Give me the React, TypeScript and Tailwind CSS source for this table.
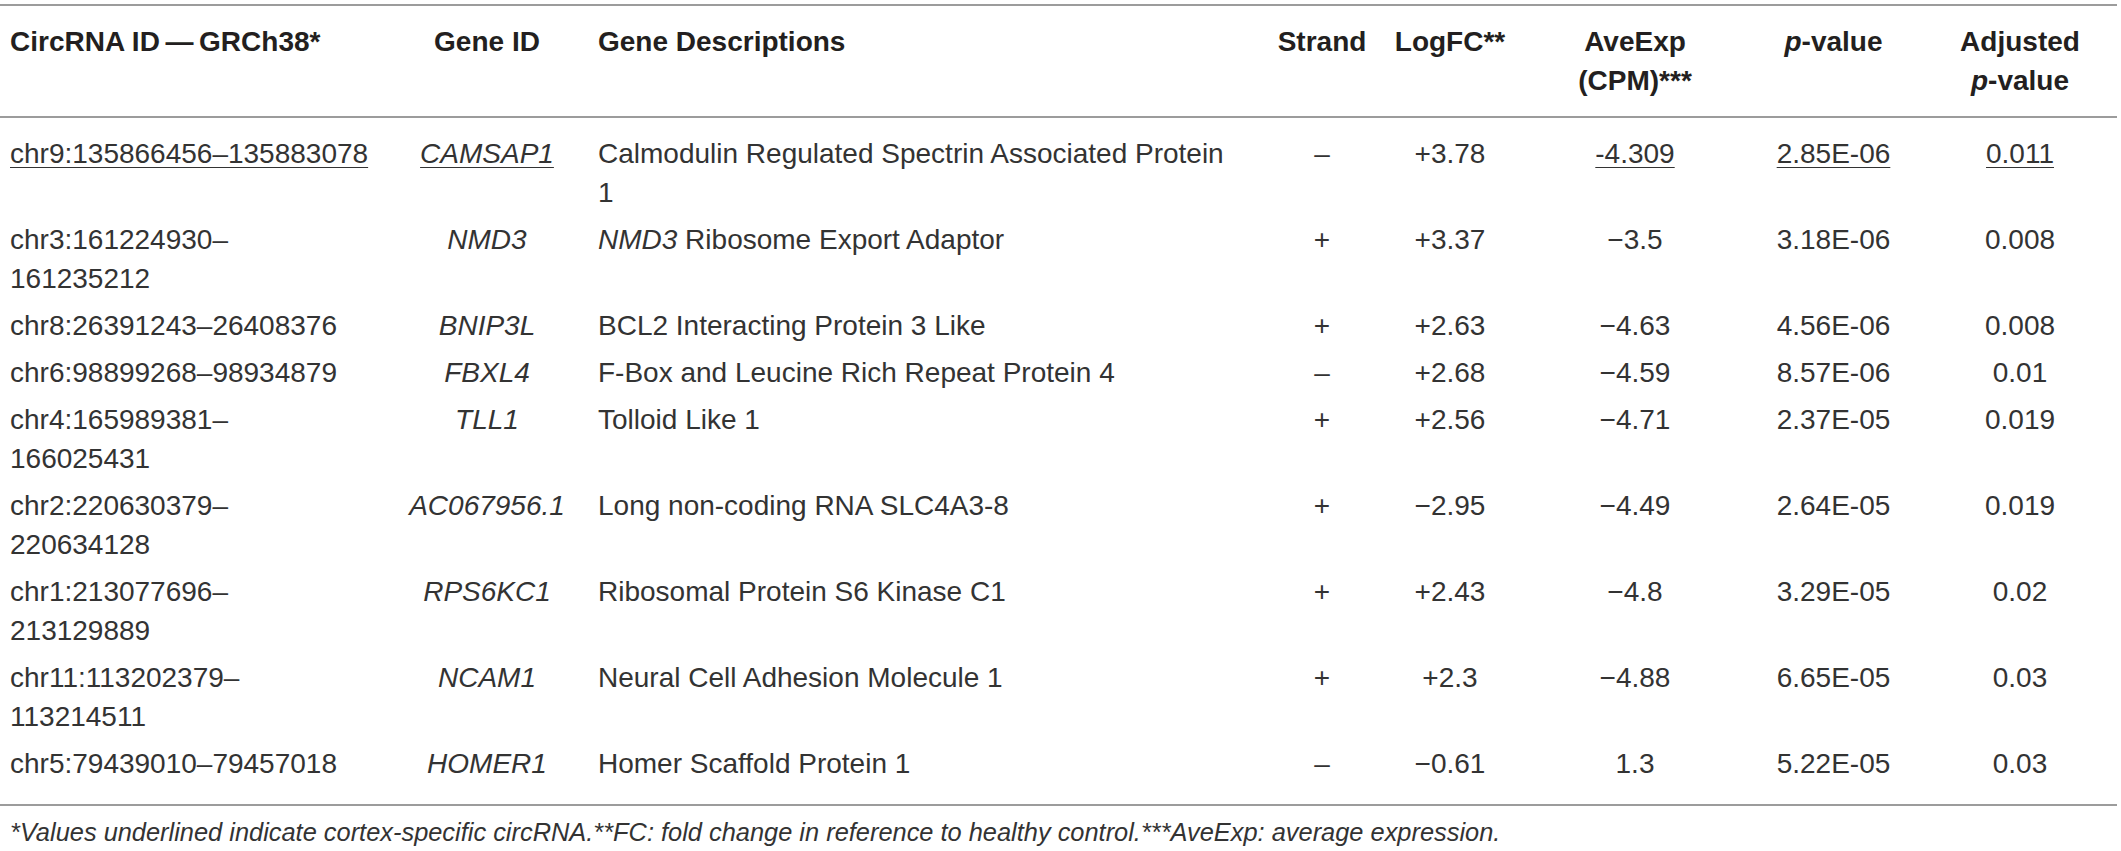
import type { ReactNode } from "react";

interface Row {
  id: string[];
  gene: string;
  desc: ReactNode[];
  strand: string;
  logfc: string;
  aveexp: string;
  p: string;
  adj: string;
  marked?: boolean;
}

const rows: Row[] = [
  {
    id: ["chr9:135866456–135883078"],
    gene: "CAMSAP1",
    desc: ["Calmodulin Regulated Spectrin Associated Protein", "1"],
    strand: "–",
    logfc: "+3.78",
    aveexp: "-4.309",
    p: "2.85E-06",
    adj: "0.011",
    marked: true,
  },
  {
    id: ["chr3:161224930–", "161235212"],
    gene: "NMD3",
    desc: [
      <>
        <i>NMD3</i> Ribosome Export Adaptor
      </>,
    ],
    strand: "+",
    logfc: "+3.37",
    aveexp: "−3.5",
    p: "3.18E-06",
    adj: "0.008",
  },
  {
    id: ["chr8:26391243–26408376"],
    gene: "BNIP3L",
    desc: ["BCL2 Interacting Protein 3 Like"],
    strand: "+",
    logfc: "+2.63",
    aveexp: "−4.63",
    p: "4.56E-06",
    adj: "0.008",
  },
  {
    id: ["chr6:98899268–98934879"],
    gene: "FBXL4",
    desc: ["F-Box and Leucine Rich Repeat Protein 4"],
    strand: "–",
    logfc: "+2.68",
    aveexp: "−4.59",
    p: "8.57E-06",
    adj: "0.01",
  },
  {
    id: ["chr4:165989381–", "166025431"],
    gene: "TLL1",
    desc: ["Tolloid Like 1"],
    strand: "+",
    logfc: "+2.56",
    aveexp: "−4.71",
    p: "2.37E-05",
    adj: "0.019",
  },
  {
    id: ["chr2:220630379–", "220634128"],
    gene: "AC067956.1",
    desc: ["Long non-coding RNA SLC4A3-8"],
    strand: "+",
    logfc: "−2.95",
    aveexp: "−4.49",
    p: "2.64E-05",
    adj: "0.019",
  },
  {
    id: ["chr1:213077696–", "213129889"],
    gene: "RPS6KC1",
    desc: ["Ribosomal Protein S6 Kinase C1"],
    strand: "+",
    logfc: "+2.43",
    aveexp: "−4.8",
    p: "3.29E-05",
    adj: "0.02",
  },
  {
    id: ["chr11:113202379–", "113214511"],
    gene: "NCAM1",
    desc: ["Neural Cell Adhesion Molecule 1"],
    strand: "+",
    logfc: "+2.3",
    aveexp: "−4.88",
    p: "6.65E-05",
    adj: "0.03",
  },
  {
    id: ["chr5:79439010–79457018"],
    gene: "HOMER1",
    desc: ["Homer Scaffold Protein 1"],
    strand: "–",
    logfc: "−0.61",
    aveexp: "1.3",
    p: "5.22E-05",
    adj: "0.03",
  },
];

const cols =
  "grid grid-cols-[400px_174px_696px_104px_152px_218px_179px_194px]";

function Lines({ items }: { items: ReactNode[] }) {
  return (
    <>
      {items.map((line, i) => (
        <div key={i} className="whitespace-nowrap">
          {line}
        </div>
      ))}
    </>
  );
}

function U({ on, children }: { on?: boolean; children: ReactNode }) {
  if (!on) return <>{children}</>;
  return (
    <span className="underline decoration-1 underline-offset-[4px]">
      {children}
    </span>
  );
}

export default function App() {
  return (
    <div
      className="w-[2117px] bg-white text-[#231f20]"
      style={{ fontFamily: '"Liberation Sans", Arial, sans-serif' }}
    >
      <div className="pt-[4px]">
        <div className="h-[2px] bg-[#9c9c9c]" />
      </div>

      {/* Header */}
      <div className={`${cols} py-[16px] text-[28px] leading-[39px] font-bold`}>
        <div className="pl-[10px] whitespace-nowrap">CircRNA ID{"\u2009—\u2009"}GRCh38*</div>
        <div className="text-center">Gene ID</div>
        <div className="pl-[24px]">Gene Descriptions</div>
        <div className="text-center">Strand</div>
        <div className="text-center">LogFC**</div>
        <div className="text-center">
          <div>AveExp</div>
          <div>(CPM)***</div>
        </div>
        <div className="text-center">
          <i>p</i>-value
        </div>
        <div className="text-center">
          <div>Adjusted</div>
          <div>
            <i>p</i>-value
          </div>
        </div>
      </div>

      <div className="h-[2px] bg-[#9c9c9c]" />

      {/* Body */}
      <div className="pt-[12px] pb-[17px] text-[28px] leading-[39px] text-[#333]">
        {rows.map((r) => (
          <div key={r.id[0]} className={`${cols} py-[4px]`}>
            <div className="pl-[10px]">
              <Lines
                items={r.id.map((t) => (
                  <U on={r.marked}>{t}</U>
                ))}
              />
            </div>
            <div className="text-center italic">
              <U on={r.marked}>{r.gene}</U>
            </div>
            <div className="pl-[24px]">
              <Lines items={r.desc} />
            </div>
            <div className="text-center">{r.strand}</div>
            <div className="text-center">{r.logfc}</div>
            <div className="text-center">
              <U on={r.marked}>{r.aveexp}</U>
            </div>
            <div className="text-center">
              <U on={r.marked}>{r.p}</U>
            </div>
            <div className="text-center">
              <U on={r.marked}>{r.adj}</U>
            </div>
          </div>
        ))}
      </div>

      <div className="h-[2px] bg-[#9c9c9c]" />

      {/* Footnote */}
      <div className="pt-[9px] pl-[10px] text-[25.4px] leading-[34px] italic text-[#333] whitespace-nowrap">
        *Values underlined indicate cortex-specific circRNA.**FC: fold change in reference to healthy control.***AveExp: average expression.
      </div>
    </div>
  );
}
